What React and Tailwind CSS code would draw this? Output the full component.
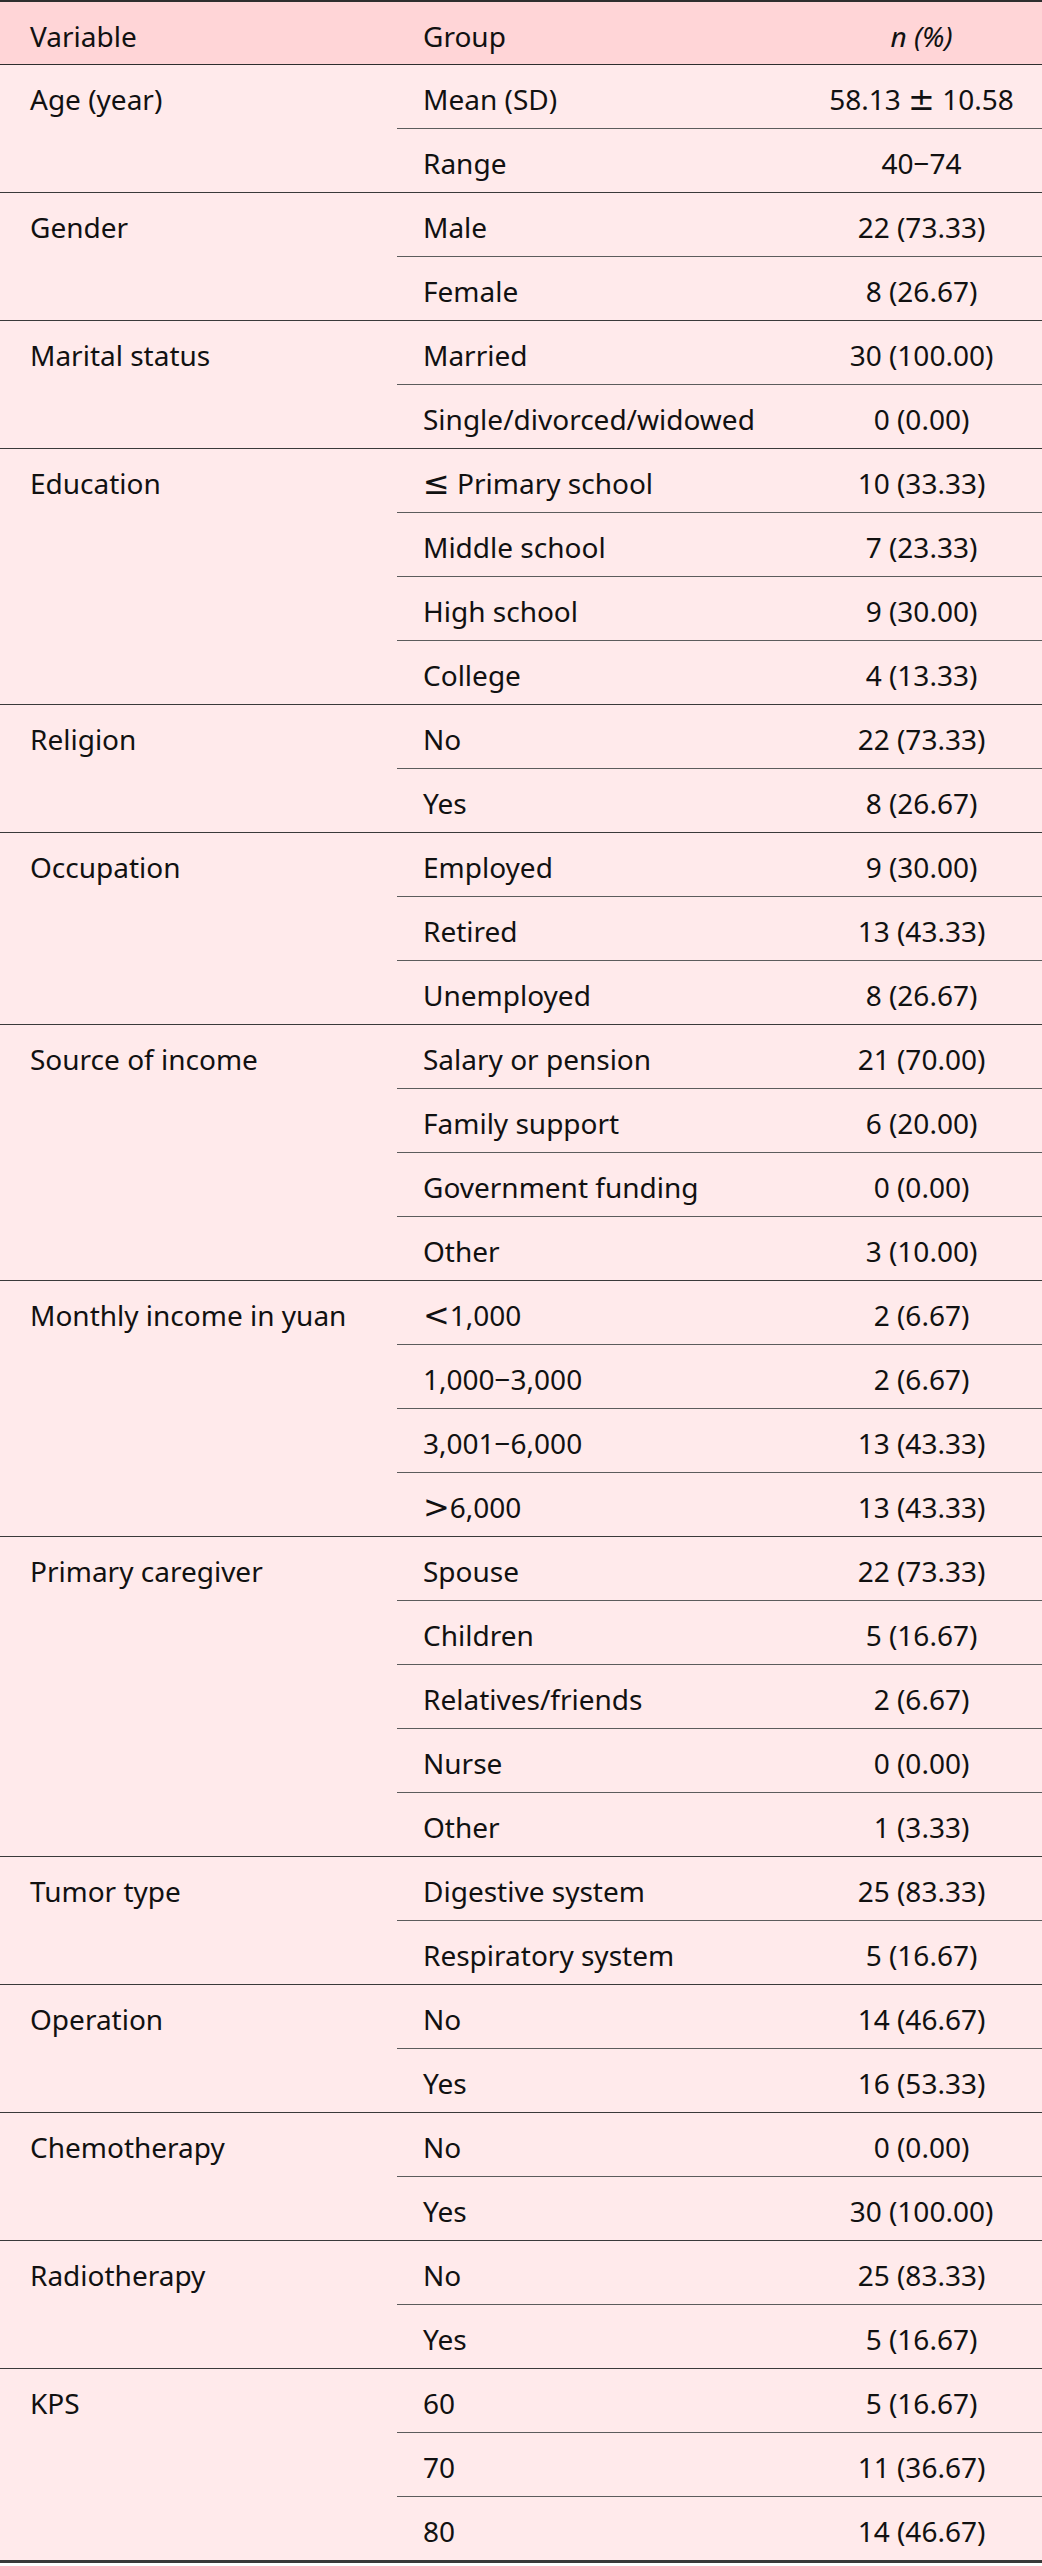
import React from "react";

const M = ({ c }) => (
  <span
    style={{ fontFamily: '"DejaVu Sans", sans-serif' }}
    className="text-[32px] leading-none"
  >
    {c}
  </span>
);

const groups = [
  ["Age (year)", [["Mean (SD)", <>58.13 <M c="±" /> 10.58</>], ["Range", "40−74"]]],
  ["Gender", [["Male", "22 (73.33)"], ["Female", "8 (26.67)"]]],
  ["Marital status", [["Married", "30 (100.00)"], ["Single/divorced/widowed", "0 (0.00)"]]],
  ["Education", [[<><M c="≤" /> Primary school</>, "10 (33.33)"], ["Middle school", "7 (23.33)"], ["High school", "9 (30.00)"], ["College", "4 (13.33)"]]],
  ["Religion", [["No", "22 (73.33)"], ["Yes", "8 (26.67)"]]],
  ["Occupation", [["Employed", "9 (30.00)"], ["Retired", "13 (43.33)"], ["Unemployed", "8 (26.67)"]]],
  ["Source of income", [["Salary or pension", "21 (70.00)"], ["Family support", "6 (20.00)"], ["Government funding", "0 (0.00)"], ["Other", "3 (10.00)"]]],
  ["Monthly income in yuan", [[<><M c="<" />1,000</>, "2 (6.67)"], ["1,000−3,000", "2 (6.67)"], ["3,001−6,000", "13 (43.33)"], [<><M c=">" />6,000</>, "13 (43.33)"]]],
  ["Primary caregiver", [["Spouse", "22 (73.33)"], ["Children", "5 (16.67)"], ["Relatives/friends", "2 (6.67)"], ["Nurse", "0 (0.00)"], ["Other", "1 (3.33)"]]],
  ["Tumor type", [["Digestive system", "25 (83.33)"], ["Respiratory system", "5 (16.67)"]]],
  ["Operation", [["No", "14 (46.67)"], ["Yes", "16 (53.33)"]]],
  ["Chemotherapy", [["No", "0 (0.00)"], ["Yes", "30 (100.00)"]]],
  ["Radiotherapy", [["No", "25 (83.33)"], ["Yes", "5 (16.67)"]]],
  ["KPS", [["60", "5 (16.67)"], ["70", "11 (36.67)"], ["80", "14 (46.67)"]]],
];

export default function App() {
  return (
    <div
      className="w-[1042px] bg-[#ffeaeb] text-[28px] leading-[42px] text-[#111]"
      style={{ fontFamily: '"Noto Sans", "Open Sans", sans-serif' }}
    >
      <div className="flex h-[65px] items-center border-t-2 border-b border-[#2e2e2e] bg-[#ffd5d7] pt-[5px]">
        <div className="w-[397px] pl-[30px]">Variable</div>
        <div className="w-[404px] pl-[26px]">Group</div>
        <div className="flex-1 text-center italic">n (%)</div>
      </div>
      {groups.map(([name, rows], gi) => (
        <div
          key={name}
          className={
            gi === groups.length - 1
              ? "flex border-b-[3px] border-[#3a3a3a]"
              : "flex border-b border-[#3a3a3a]"
          }
        >
          <div className="w-[397px] shrink-0 pl-[30px]">
            <div className="flex h-[63px] items-center pt-[5px]">{name}</div>
          </div>
          <div className="flex flex-1 flex-col">
            {rows.map(([g, v], i) => (
              <div
                key={i}
                className={
                  i < rows.length - 1
                    ? "flex h-[64px] items-center border-b border-[#5c5c5c] pt-[5px]"
                    : "flex h-[63px] items-center pt-[5px]"
                }
              >
                <div className="w-[404px] pl-[26px]">{g}</div>
                <div className="flex-1 text-center">{v}</div>
              </div>
            ))}
          </div>
        </div>
      ))}
    </div>
  );
}
